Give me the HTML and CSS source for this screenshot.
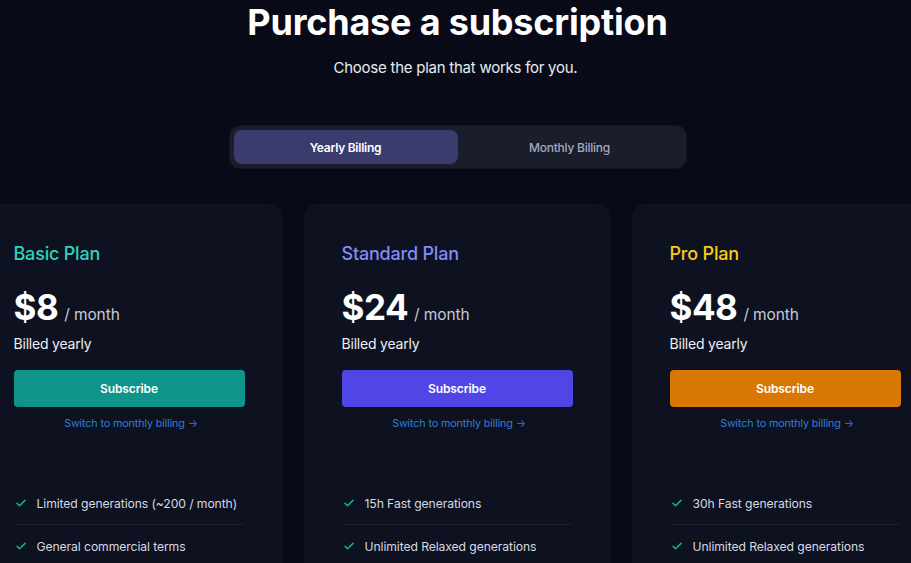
FILE: index.html
```html
<!DOCTYPE html>
<html>
<head>
<meta charset="utf-8">
<link rel="stylesheet" href="styles.css">
</head>
<body>
<main class="page">
  <h1 class="title">Purchase a subscription</h1>
  <p class="subtitle">Choose the plan that works for you.</p>
  <div class="toggle">
    <button class="tab active">Yearly Billing</button>
    <button class="tab">Monthly Billing</button>
  </div>
  <section class="plans">
    <article class="card">
      <div class="card-top">
        <h2 class="plan-name basic">Basic Plan</h2>
        <div class="price"><span class="amount">$8</span><span class="per">/ month</span></div>
        <div class="billed">Billed yearly</div>
        <button class="subscribe basic-btn">Subscribe</button>
        <a class="switch">Switch to monthly billing →</a>
      </div>
      <ul class="features">
        <li><svg class="check" viewBox="0 0 12 12"><path d="M2 6.3l2.6 2.5L10 3.4"/></svg>Limited generations (~200 / month)</li>
        <li><svg class="check" viewBox="0 0 12 12"><path d="M2 6.3l2.6 2.5L10 3.4"/></svg>General commercial terms</li>
      </ul>
    </article>
    <article class="card">
      <div class="card-top">
        <h2 class="plan-name standard">Standard Plan</h2>
        <div class="price"><span class="amount">$24</span><span class="per">/ month</span></div>
        <div class="billed">Billed yearly</div>
        <button class="subscribe standard-btn">Subscribe</button>
        <a class="switch">Switch to monthly billing →</a>
      </div>
      <ul class="features">
        <li><svg class="check" viewBox="0 0 12 12"><path d="M2 6.3l2.6 2.5L10 3.4"/></svg>15h Fast generations</li>
        <li><svg class="check" viewBox="0 0 12 12"><path d="M2 6.3l2.6 2.5L10 3.4"/></svg>Unlimited Relaxed generations</li>
      </ul>
    </article>
    <article class="card">
      <div class="card-top">
        <h2 class="plan-name pro">Pro Plan</h2>
        <div class="price"><span class="amount">$48</span><span class="per">/ month</span></div>
        <div class="billed">Billed yearly</div>
        <button class="subscribe pro-btn">Subscribe</button>
        <a class="switch">Switch to monthly billing →</a>
      </div>
      <ul class="features">
        <li><svg class="check" viewBox="0 0 12 12"><path d="M2 6.3l2.6 2.5L10 3.4"/></svg>30h Fast generations</li>
        <li><svg class="check" viewBox="0 0 12 12"><path d="M2 6.3l2.6 2.5L10 3.4"/></svg>Unlimited Relaxed generations</li>
      </ul>
    </article>
  </section>
</main>
</body>
</html>
```

FILE: styles.css
```css
* { box-sizing: border-box; }
html, body {
  margin: 0;
  padding: 0;
  background: #080a17;
  height: 100%;
  overflow: hidden;
}
body {
  font-family: Inter, "Noto Sans", sans-serif;
  color: #fff;
}
.page {
  display: flex;
  flex-direction: column;
  align-items: center;
  width: 911px;
}
.title {
  margin: 0;
  font-size: 36px;
  line-height: 44px;
  font-weight: 700;
  letter-spacing: -0.2px;
  color: #fff;
  transform: translateX(2px);
}
.subtitle {
  margin: 14px 0 0;
  font-size: 15px;
  line-height: 20px;
  color: #e8eaf0;
  letter-spacing: -0.25px;
}
.toggle {
  margin-top: 48px;
  width: 456px;
  height: 42px;
  padding: 4px;
  background: #1a1d2c;
  border-radius: 10px;
  display: flex;
  box-shadow: 0 0 0 1px #12141f;
  transform: translateX(2px);
}
.tab {
  flex: 1;
  border: 0;
  background: transparent;
  font-family: inherit;
  font-size: 12px;
  font-weight: 500;
  color: #a3abbd;
  border-radius: 8px;
  letter-spacing: -0.25px;
}
.tab.active {
  background: #3a3c6e;
  color: #fff;
  font-weight: 600;
}
.plans {
  margin-top: 37px;
  display: flex;
  gap: 24px;
  justify-content: center;
  width: 911px;
  transform: translateX(1px);
}
.card {
  flex: 0 0 304px;
  width: 304px;
  height: 400px;
  background: #0d1120;
  border-radius: 12px;
  padding: 0 36px 0 37px;
  box-shadow: 0 0 0 1px #0f1323;
}
.card-top {
  display: flex;
  flex-direction: column;
  padding-top: 36px;
}
.plan-name {
  margin: 0;
  font-size: 18px;
  line-height: 26px;
  font-weight: 500;
  letter-spacing: -0.2px;
}
.basic { color: #2dd4bf; }
.standard { color: #818cf8; }
.pro { color: #facc15; }
.price {
  margin-top: 20px;
  display: flex;
  align-items: baseline;
  gap: 6px;
  height: 40px;
}
.amount {
  font-size: 35px;
  font-weight: 700;
  line-height: 40px;
  letter-spacing: -0.5px;
}
.per {
  font-size: 15.5px;
  color: #c5cad6;
  letter-spacing: -0.1px;
}
.billed {
  margin-top: 8px;
  font-size: 14px;
  line-height: 18px;
  color: #eef0f4;
  letter-spacing: -0.2px;
}
.subscribe {
  margin-top: 17px;
  height: 37px;
  width: 100%;
  border: 0;
  border-radius: 4px;
  font-family: inherit;
  font-size: 12px;
  font-weight: 600;
  color: #fff;
  letter-spacing: -0.1px;
}
.basic-btn { background: #0e9488; }
.standard-btn { background: #4f46e5; }
.pro-btn { background: #d97706; }
.switch {
  margin-top: 10px;
  text-align: center;
  font-size: 10.8px;
  line-height: 14px;
  color: #2f7fd8;
  letter-spacing: -0.15px;
  padding-left: 4px;
}
.features {
  list-style: none;
  margin: 51px 0 0;
  padding: 0;
}
.features li {
  display: flex;
  align-items: center;
  height: 43px;
  font-size: 12.2px;
  color: #d6d9e0;
  letter-spacing: -0.1px;
  border-bottom: 1px solid #1a1e2d;
}
.check {
  width: 12px;
  height: 12px;
  margin: 0 10px 0 1px;
  fill: none;
  stroke: #10b981;
  stroke-width: 1.5;
  stroke-linecap: round;
  stroke-linejoin: round;
}
```
